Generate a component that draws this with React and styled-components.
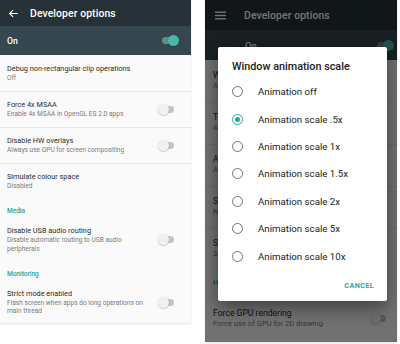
import React from 'react';
import styled, { createGlobalStyle } from 'styled-components';

const teal = '#26a69a';

const GlobalStyle = createGlobalStyle`
  html, body {
    margin: 0;
    padding: 0;
    background: #fff;
  }
  body {
    font-family: Roboto, "Noto Sans", "Liberation Sans", sans-serif;
    -webkit-font-smoothing: antialiased;
  }
`;

const Page = styled.div`
  display: flex;
  align-items: flex-start;
  gap: 14px;
  width: 400px;
  height: 344px;
  overflow: hidden;
`;

const Phone = styled.div`
  position: relative;
  width: ${({ $w }) => $w}px;
  height: ${({ $h }) => $h}px;
  background: #fafafa;
  overflow: hidden;
  box-shadow: 0 1px 2px rgba(0, 0, 0, 0.12);
`;

const TitleBar = styled.div`
  display: flex;
  align-items: center;
  gap: ${({ $gap }) => $gap}px;
  height: ${({ $h }) => $h}px;
  padding-left: ${({ $inset }) => $inset}px;
  background: #263238;
  color: #fff;
`;

const Title = styled.div`
  font-size: 10.4px;
  font-weight: 500;
  letter-spacing: 0.1px;
`;

const MasterRow = styled.div`
  display: flex;
  align-items: center;
  justify-content: space-between;
  height: ${({ $h }) => $h}px;
  padding: 0 ${({ $right }) => $right}px 0 ${({ $inset }) => $inset}px;
  background: #37474f;
  color: #fff;
  font-size: ${({ $size }) => $size}px;
  font-weight: 500;
`;

const Item = styled.div`
  display: flex;
  align-items: center;
  justify-content: space-between;
  padding: ${({ $big }) => ($big ? '10px 9px 11px 8px' : '9.25px 15px 8.5px 7px')};
  border-bottom: ${({ $divider }) => ($divider ? '1px solid #e6e6e6' : 'none')};
  margin-bottom: ${({ $divider }) => ($divider ? '-1px' : '0')};
`;

const ItemText = styled.div`
  display: flex;
  flex-direction: column;
  max-width: ${({ $big }) => ($big ? 165 : 146)}px;
`;

const ItemTitle = styled.div`
  font-size: ${({ $big }) => ($big ? 8.6 : 7.3)}px;
  line-height: ${({ $big }) => ($big ? 11 : 10)}px;
  color: #2b2b2b;
  white-space: nowrap;
`;

const ItemSub = styled.div`
  font-size: ${({ $big }) => ($big ? 7.6 : 6.6)}px;
  line-height: ${({ $big }) => ($big ? 10 : 8.3)}px;
  color: #7a7a7a;
`;

const Category = styled.div`
  padding: ${({ $big }) => ($big ? '8px 8px 10px' : '8px 7px 2px')};
  font-size: ${({ $big }) => ($big ? 7.5 : 6.5)}px;
  line-height: ${({ $big }) => ($big ? 10 : 8)}px;
  font-weight: 500;
  color: ${teal};
  white-space: nowrap;
`;

const Switch = styled.div`
  position: relative;
  flex: none;
  width: 18px;
  height: 11px;

  &::before {
    content: '';
    position: absolute;
    left: 2px;
    top: 2px;
    width: 14px;
    height: 7px;
    border-radius: 4px;
    background: ${({ $on }) => ($on ? '#80cbc4' : '#c4c4c4')};
    opacity: ${({ $on }) => ($on ? 0.55 : 1)};
  }

  &::after {
    content: '';
    position: absolute;
    top: 0;
    left: ${({ $on }) => ($on ? 8 : 0)}px;
    width: 11px;
    height: 11px;
    border-radius: 50%;
    background: ${({ $on }) => ($on ? '#4db6ac' : '#f1f1f1')};
    box-shadow: 0 0.5px 1.5px rgba(0, 0, 0, 0.3);
  }
`;

const Scrim = styled.div`
  position: absolute;
  inset: 0;
  background: rgba(0, 0, 0, 0.55);
`;

const Dialog = styled.div`
  position: absolute;
  left: 13px;
  top: 47px;
  width: 169px;
  height: 254px;
  background: #fff;
  border-radius: 2px;
  box-shadow: 0 6px 18px rgba(0, 0, 0, 0.45);
  display: flex;
  flex-direction: column;
`;

const DialogTitle = styled.div`
  height: 31px;
  padding: 13px 0 0 14px;
  box-sizing: border-box;
  font-size: 10.8px;
  font-weight: 500;
  color: #212121;
`;

const Options = styled.div`
  display: flex;
  flex-direction: column;
`;

const Option = styled.div`
  display: flex;
  align-items: center;
  height: 27.4px;
  padding-left: 14px;
  gap: 15px;
  font-size: 9.7px;
  color: #212121;
`;

const Radio = styled.div`
  position: relative;
  width: 9px;
  height: 9px;
  border-radius: 50%;
  border: 1.5px solid ${({ $checked }) => ($checked ? teal : '#737373')};

  &::after {
    content: '';
    display: ${({ $checked }) => ($checked ? 'block' : 'none')};
    position: absolute;
    left: 2px;
    top: 2px;
    width: 5px;
    height: 5px;
    border-radius: 50%;
    background: ${teal};
  }
`;

const Actions = styled.div`
  flex: 1;
  display: flex;
  align-items: center;
  justify-content: flex-end;
  padding-right: 13px;
`;

const TextButton = styled.div`
  font-size: 7.2px;
  font-weight: 700;
  letter-spacing: 0.4px;
  color: ${teal};
`;

const BackArrow = () => (
  <svg width="11" height="11" viewBox="0 0 24 24" fill="none" stroke="#fff" strokeWidth="2.6">
    <path d="M21 12H4M11 4.5L3.5 12l7.5 7.5" />
  </svg>
);

const MenuIcon = () => (
  <svg width="11" height="9" viewBox="0 0 11 9" fill="#fff">
    <rect x="0" y="0.5" width="11" height="1.4" />
    <rect x="0" y="3.8" width="11" height="1.4" />
    <rect x="0" y="7.1" width="11" height="1.4" />
  </svg>
);

const leftList = [
  { title: 'Debug non-rectangular clip operations', sub: 'Off', divider: true },
  { title: 'Force 4x MSAA', sub: 'Enable 4x MSAA in OpenGL ES 2.0 apps', toggle: true, divider: true },
  { title: 'Disable HW overlays', sub: 'Always use GPU for screen compositing', toggle: true, divider: true },
  { title: 'Simulate colour space', sub: 'Disabled' },
  { category: 'Media' },
  { title: 'Disable USB audio routing', sub: 'Disable automatic routing to USB audio peripherals', toggle: true },
  { category: 'Monitoring' },
  { title: 'Strict mode enabled', sub: 'Flash screen when apps do long operations on main thread', toggle: true },
];

const rightList = [
  { title: 'Window animation scale', sub: 'Animation scale .5x', divider: true },
  { title: 'Transition animation scale', sub: 'Animation scale 1x', divider: true },
  { title: 'Animator duration scale', sub: 'Animation scale 1x', divider: true },
  { title: 'Simulate secondary displays', sub: 'None', divider: true },
  { title: 'Smallest width', sub: '360 dp' },
  { category: 'Hardware accelerated rendering' },
  { title: 'Force GPU rendering', sub: 'Force use of GPU for 2D drawing', toggle: true },
];

const scales = [
  'Animation off',
  'Animation scale .5x',
  'Animation scale 1x',
  'Animation scale 1.5x',
  'Animation scale 2x',
  'Animation scale 5x',
  'Animation scale 10x',
];

const SettingsList = ({ items, big }) =>
  items.map((it, i) =>
    it.category ? (
      <Category key={i} $big={big}>
        {it.category}
      </Category>
    ) : (
      <Item key={i} $big={big} $divider={it.divider}>
        <ItemText $big={big}>
          <ItemTitle $big={big}>{it.title}</ItemTitle>
          <ItemSub $big={big}>{it.sub}</ItemSub>
        </ItemText>
        {it.toggle && <Switch />}
      </Item>
    )
  );

const App = () => (
  <>
    <GlobalStyle />
    <Page>
      <Phone $w={191} $h={323}>
        <TitleBar $h={26} $inset={8} $gap={11}>
          <BackArrow />
          <Title>Developer options</Title>
        </TitleBar>
        <MasterRow $h={29} $inset={7} $right={13} $size={8.6}>
          On
          <Switch $on />
        </MasterRow>
        <SettingsList items={leftList} />
      </Phone>

      <Phone $w={192} $h={342}>
        <TitleBar $h={30} $inset={10} $gap={18}>
          <MenuIcon />
          <Title>Developer options</Title>
        </TitleBar>
        <MasterRow $h={30} $inset={40} $right={4} $size={9.5}>
          On
          <Switch $on />
        </MasterRow>
        <SettingsList items={rightList} big />
        <Scrim />
        <Dialog>
          <DialogTitle>Window animation scale</DialogTitle>
          <Options>
            {scales.map((s, i) => (
              <Option key={s}>
                <Radio $checked={i === 1} />
                {s}
              </Option>
            ))}
          </Options>
          <Actions>
            <TextButton>CANCEL</TextButton>
          </Actions>
        </Dialog>
      </Phone>
    </Page>
  </>
);

export default App;
